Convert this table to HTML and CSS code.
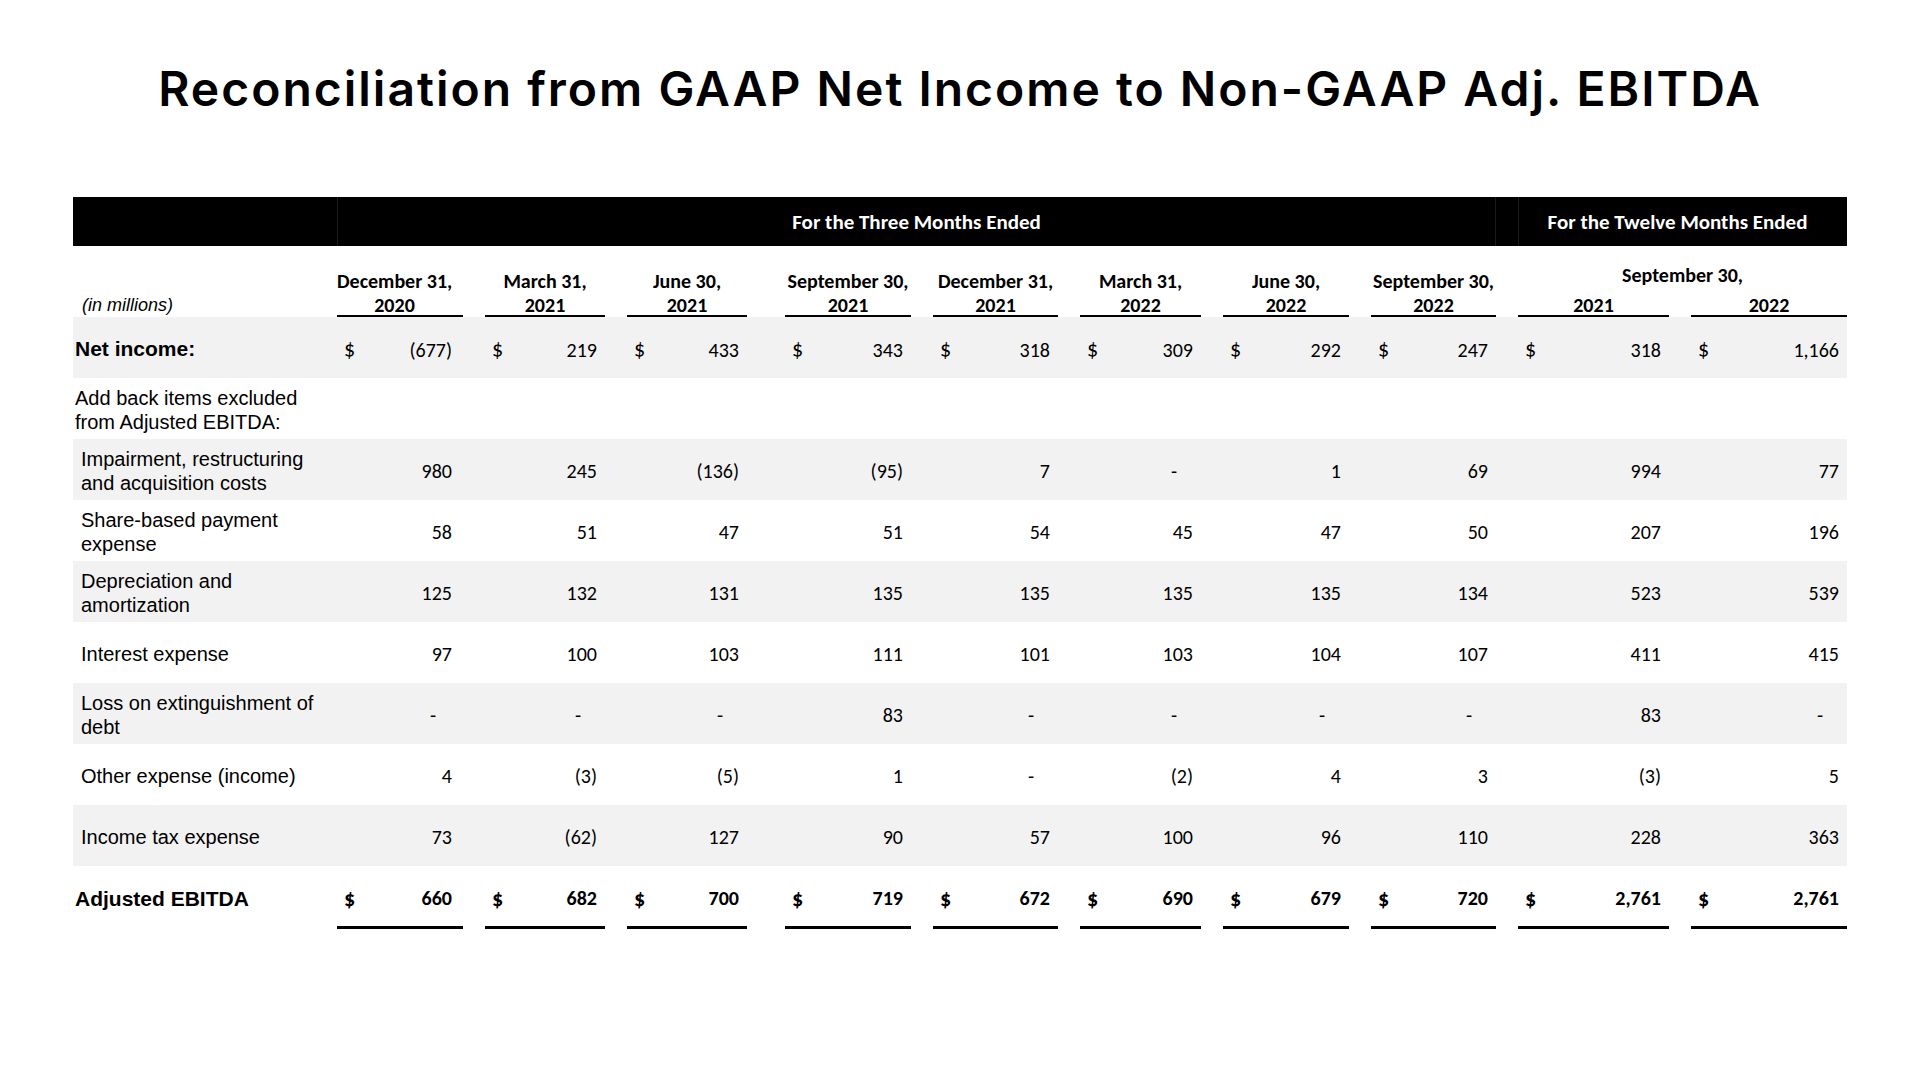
FILE: index.html
```html
<!DOCTYPE html>
<html lang="en">

<head>
     <meta charset="UTF-8">
     <meta name="viewport" content="width=device-width, initial-scale=1.0">
     <title>Reconciliation from GAAP Net Income to Non-GAAP Adj. EBITDA</title>
     <link rel="stylesheet" href="styles.css">
</head>

<body>
     <main class="slide">
          <h1 class="slide-title">Reconciliation from GAAP Net Income to Non-GAAP Adj. EBITDA</h1>

          <div class="recon">
               <!-- black period bar -->
               <div class="row bar">
                    <div class="bar-three">For the Three Months Ended</div>
                    <div class="bar-twelve">For the Twelve Months Ended</div>
               </div>

               <!-- column dates -->
               <div class="row head">
                    <div class="units">(in millions)</div>
                    <div class="date">December 31,<br>2020</div>
                    <div class="date">March 31,<br>2021</div>
                    <div class="date">June 30,<br>2021</div>
                    <div class="date">September 30,<br>2021</div>
                    <div class="date">December 31,<br>2021</div>
                    <div class="date">March 31,<br>2022</div>
                    <div class="date">June 30,<br>2022</div>
                    <div class="date">September 30,<br>2022</div>
                    <div class="date-span">September 30,</div>
                    <div class="year">2021</div>
                    <div class="year">2022</div>
               </div>

               <div class="row shade">
                    <div class="label strong">Net income:</div>
                    <div class="num"><span class="cur">$</span><span>(677)</span></div>
                    <div class="num"><span class="cur">$</span><span>219</span></div>
                    <div class="num"><span class="cur">$</span><span>433</span></div>
                    <div class="num"><span class="cur">$</span><span>343</span></div>
                    <div class="num"><span class="cur">$</span><span>318</span></div>
                    <div class="num"><span class="cur">$</span><span>309</span></div>
                    <div class="num"><span class="cur">$</span><span>292</span></div>
                    <div class="num"><span class="cur">$</span><span>247</span></div>
                    <div class="num"><span class="cur">$</span><span>318</span></div>
                    <div class="num"><span class="cur">$</span><span>1,166</span></div>
               </div>

               <div class="row">
                    <div class="label">Add back items excluded<br>from Adjusted EBITDA:</div>
               </div>

               <div class="row shade">
                    <div class="label indent">Impairment, restructuring<br>and acquisition costs</div>
                    <div class="num"><span>980</span></div>
                    <div class="num"><span>245</span></div>
                    <div class="num"><span>(136)</span></div>
                    <div class="num"><span>(95)</span></div>
                    <div class="num"><span>7</span></div>
                    <div class="num"><span class="dash">-</span></div>
                    <div class="num"><span>1</span></div>
                    <div class="num"><span>69</span></div>
                    <div class="num"><span>994</span></div>
                    <div class="num"><span>77</span></div>
               </div>

               <div class="row">
                    <div class="label indent">Share-based payment<br>expense</div>
                    <div class="num"><span>58</span></div>
                    <div class="num"><span>51</span></div>
                    <div class="num"><span>47</span></div>
                    <div class="num"><span>51</span></div>
                    <div class="num"><span>54</span></div>
                    <div class="num"><span>45</span></div>
                    <div class="num"><span>47</span></div>
                    <div class="num"><span>50</span></div>
                    <div class="num"><span>207</span></div>
                    <div class="num"><span>196</span></div>
               </div>

               <div class="row shade">
                    <div class="label indent">Depreciation and<br>amortization</div>
                    <div class="num"><span>125</span></div>
                    <div class="num"><span>132</span></div>
                    <div class="num"><span>131</span></div>
                    <div class="num"><span>135</span></div>
                    <div class="num"><span>135</span></div>
                    <div class="num"><span>135</span></div>
                    <div class="num"><span>135</span></div>
                    <div class="num"><span>134</span></div>
                    <div class="num"><span>523</span></div>
                    <div class="num"><span>539</span></div>
               </div>

               <div class="row">
                    <div class="label indent">Interest expense</div>
                    <div class="num"><span>97</span></div>
                    <div class="num"><span>100</span></div>
                    <div class="num"><span>103</span></div>
                    <div class="num"><span>111</span></div>
                    <div class="num"><span>101</span></div>
                    <div class="num"><span>103</span></div>
                    <div class="num"><span>104</span></div>
                    <div class="num"><span>107</span></div>
                    <div class="num"><span>411</span></div>
                    <div class="num"><span>415</span></div>
               </div>

               <div class="row shade">
                    <div class="label indent">Loss on extinguishment of<br>debt</div>
                    <div class="num"><span class="dash">-</span></div>
                    <div class="num"><span class="dash">-</span></div>
                    <div class="num"><span class="dash">-</span></div>
                    <div class="num"><span>83</span></div>
                    <div class="num"><span class="dash">-</span></div>
                    <div class="num"><span class="dash">-</span></div>
                    <div class="num"><span class="dash">-</span></div>
                    <div class="num"><span class="dash">-</span></div>
                    <div class="num"><span>83</span></div>
                    <div class="num"><span class="dash">-</span></div>
               </div>

               <div class="row">
                    <div class="label indent">Other expense (income)</div>
                    <div class="num"><span>4</span></div>
                    <div class="num"><span>(3)</span></div>
                    <div class="num"><span>(5)</span></div>
                    <div class="num"><span>1</span></div>
                    <div class="num"><span class="dash">-</span></div>
                    <div class="num"><span>(2)</span></div>
                    <div class="num"><span>4</span></div>
                    <div class="num"><span>3</span></div>
                    <div class="num"><span>(3)</span></div>
                    <div class="num"><span>5</span></div>
               </div>

               <div class="row shade">
                    <div class="label indent">Income tax expense</div>
                    <div class="num"><span>73</span></div>
                    <div class="num"><span>(62)</span></div>
                    <div class="num"><span>127</span></div>
                    <div class="num"><span>90</span></div>
                    <div class="num"><span>57</span></div>
                    <div class="num"><span>100</span></div>
                    <div class="num"><span>96</span></div>
                    <div class="num"><span>110</span></div>
                    <div class="num"><span>228</span></div>
                    <div class="num"><span>363</span></div>
               </div>

               <div class="row total">
                    <div class="label strong">Adjusted EBITDA</div>
                    <div class="num"><span class="cur">$</span><span>660</span></div>
                    <div class="num"><span class="cur">$</span><span>682</span></div>
                    <div class="num"><span class="cur">$</span><span>700</span></div>
                    <div class="num"><span class="cur">$</span><span>719</span></div>
                    <div class="num"><span class="cur">$</span><span>672</span></div>
                    <div class="num"><span class="cur">$</span><span>690</span></div>
                    <div class="num"><span class="cur">$</span><span>679</span></div>
                    <div class="num"><span class="cur">$</span><span>720</span></div>
                    <div class="num"><span class="cur">$</span><span>2,761</span></div>
                    <div class="num"><span class="cur">$</span><span>2,761</span></div>
               </div>
          </div>
     </main>
</body>

</html>
```

FILE: styles.css
```css
* {
     padding: 0;
     margin: 0;
     box-sizing: border-box;
}

body {
     background: #fff;
     color: #000;
}

.slide {
     width: 1920px;
     height: 1080px;
     padding: 61px 73px 0;
}

.slide-title {
     font-family: Inter, "Open Sans", sans-serif;
     font-weight: 600;
     font-size: 48px;
     line-height: 56px;
     letter-spacing: 2px;
     text-align: center;
}

.recon {
     margin-top: 80px;
     font-family: Carlito, Calibri, "Liberation Sans Narrow", "Open Sans", sans-serif;
     font-size: 20px;
}

/* shared column grid */
.row {
     display: grid;
     grid-template-columns: 242px 126px 120px 120px 142px 125px 121px 126px 125px 151px 156px;
     column-gap: 22px;
     height: 61px;
     align-items: center;
}

.row > :nth-child(5) {
     margin-left: 16px;
}

.shade {
     background: #f2f2f2;
}

/* black bar */
.bar {
     height: 49px;
     background: #000;
     color: #fff;
     font-weight: 700;
     font-size: 21px;
     align-items: stretch;
}

.bar-three {
     grid-column: 2 / 10;
     display: flex;
     align-items: center;
     justify-content: center;
     border-left: 1px solid #1a1a1a;
     border-right: 1px solid #1a1a1a;
}

.bar-twelve {
     grid-column: 10 / 12;
     display: flex;
     align-items: center;
     justify-content: center;
     border-left: 1px solid #1a1a1a;
}

/* date headers */
.head {
     height: 71px;
     grid-template-rows: 1fr 24px;
     align-items: end;
     font-weight: 700;
     line-height: 24px;
     text-align: center;
     white-space: nowrap;
}

.head .units {
     grid-row: 1 / 3;
     font-family: "Liberation Sans", Arial, sans-serif;
     font-style: italic;
     font-weight: 400;
     font-size: 18px;
     text-align: left;
     padding-left: 9px;
}

.date {
     grid-row: 1 / 3;
     box-shadow: inset 0 -2px 0 #000;
}

.date-span {
     grid-column: 10 / 12;
     grid-row: 1;
     margin-bottom: 6px;
}

.year {
     grid-row: 2;
     box-shadow: inset 0 -2px 0 #000;
}

/* row labels */
.label {
     font-family: "Liberation Sans", Arial, sans-serif;
     font-size: 20px;
     line-height: 24px;
     padding: 3px 0 0 2px;
}

.label.indent {
     padding-left: 8px;
}

.label.strong {
     font-weight: 700;
     font-size: 21px;
}

/* amounts */
.num {
     display: flex;
     justify-content: flex-end;
     align-items: baseline;
     padding: 3px 8px 0 7px;
}

.num .cur {
     margin-right: auto;
     font-size: 22px;
}

.row > :nth-child(2) {
     padding-right: 11px;
}

.dash {
     margin-right: 16px;
}

.total {
     height: 63px;
     align-items: stretch;
     font-weight: 700;
}

.total .label {
     display: flex;
     align-items: center;
}

.total .num {
     align-items: center;
     padding-top: 4px;
     border-bottom: 3px solid #000;
}
```
